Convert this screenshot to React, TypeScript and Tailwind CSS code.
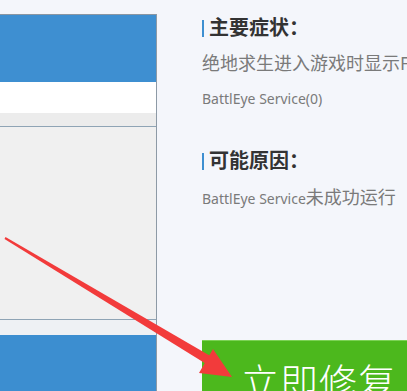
const cjk = "font-['Noto_Sans','Noto_Sans_CJK_SC',sans-serif]";

const SectionTitle = ({ text }: { text: string }) => (
  <div className="flex items-center h-[24px]">
    <span className="w-[2px] h-[17px] bg-[#3d8fd1] mr-[5px]" />
    <span className="text-[20px] font-bold text-[#333] leading-[24px]">{text}</span>
  </div>
);

const App = () => {
  return (
    <div className={`relative w-[407px] h-[391px] overflow-hidden bg-[#f4f6fb] flex ${cjk}`}>
      {/* left window */}
      <div className="w-[157px] flex flex-col pt-[14px] shrink-0">
        <div className="flex-1 flex flex-col border-r border-[#8d9aa6]">
          <div className="h-[68px] bg-[#3e8fd1] border-t border-[#8a96a2]" />
          <div className="h-[31px] bg-white" />
          <div className="h-[14px] bg-[#ececec] border-b border-[#8fa4b5]" />
          <div className="h-[193px] bg-[#f0f0f0] border-b border-[#8fa4b5]" />
          <div className="h-[15px] bg-[#eef1f4]" />
          <div className="flex-1 bg-[#3c8ed0]" />
        </div>
      </div>

      {/* right info */}
      <div className="flex-1 flex flex-col pl-[45px] pt-[16px] whitespace-nowrap">
        <SectionTitle text="主要症状：" />
        <div className="mt-[5px] text-[#7a7a7a] leading-[36px]">
          <div className="text-[18px]">绝地求生进入游戏时显示Failed to start</div>
          <div className="text-[14px]">BattlEye Service(0)</div>
        </div>
        <div className="mt-[32px]">
          <SectionTitle text="可能原因：" />
        </div>
        <div className="mt-[6px] text-[#7a7a7a] leading-[36px] text-[14px]">
          BattlEye Service<span className="text-[18px]">未成功运行</span>
        </div>
        <button className="mt-[123px] h-[70px] bg-[#4cb81d] border-t border-[#7cd255] text-white text-[38px] font-light text-left pl-[39px] leading-[80px] tracking-[1px]">
          立即修复
        </button>
      </div>

      {/* red arrow overlay */}
      <svg className="absolute inset-0 pointer-events-none" width="407" height="391" viewBox="0 0 407 391">
        <polygon points="4.5,238.9 5.5,237.1 217.3,360.1 212.7,367.9" fill="#f23b3b" />
        <polygon points="232,377 213,349 199,373" fill="#f23b3b" />
      </svg>
    </div>
  );
};

export default App;
